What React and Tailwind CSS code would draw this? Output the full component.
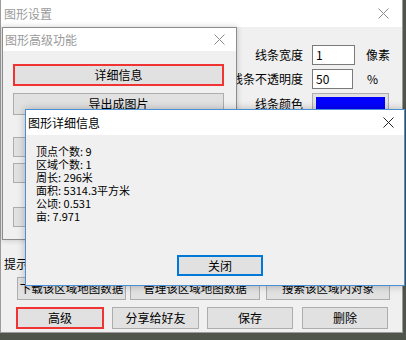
const font = "font-['Noto_Sans_CJK_SC','Microsoft_YaHei',sans-serif]";

const CloseIcon = ({ color = '#000' }) => (
  <svg width="11" height="11" viewBox="0 0 11 11">
    <path d="M0.5 0.5L10.5 10.5M10.5 0.5L0.5 10.5" stroke={color} strokeWidth="1" />
  </svg>
);

const WinButton = ({ children, className = '' }) => (
  <div
    className={
      'flex items-center justify-center bg-[#e1e1e1] text-black leading-none whitespace-nowrap ' +
      className
    }
  >
    {children}
  </div>
);

const App = () => {
  const details = [
    '顶点个数: 9',
    '区域个数: 1',
    '周长: 296米',
    '面积: 5314.3平方米',
    '公顷: 0.531',
    '亩: 7.971',
  ];

  return (
    <div className={`relative w-[406px] h-[340px] overflow-hidden bg-[#4f554a] ${font}`}>
      {/*main settings window*/}
      <div className="absolute left-0 top-0 w-[403px] h-[333px] flex flex-col bg-[#f0f0f0] border-x border-b border-[#9c9c9c]">
        <div className="h-[27px] shrink-0 bg-white flex items-center justify-between pl-[3px] pr-[13px]">
          <span className="text-[12px] text-[#9a9a9a]">图形设置</span>
          <CloseIcon color="#8a8a8a" />
        </div>

        <div className="flex-1 flex flex-col">
          <div className="mt-[18px] ml-[222px] grid grid-cols-[89px_54px_auto] gap-y-[4px] items-center text-[12px] text-black">
            <div className="pr-[9px] text-right leading-[20px]">线条宽度</div>
            <div className="w-[43px] h-[20px] bg-white border border-[#7a7a7a] pl-[3px] leading-[18px]">1</div>
            <div className="leading-[20px]">像素</div>

            <div className="pr-[9px] text-right leading-[20px] whitespace-nowrap">线条不透明度</div>
            <div className="w-[41px] h-[20px] bg-white border border-[#7a7a7a] pl-[3px] leading-[18px]">50</div>
            <div className="leading-[20px] pl-[1px]">%</div>

            <div className="pr-[9px] text-right leading-[21px]">线条颜色</div>
            <div className="col-span-2 w-[77px] h-[21px] border border-[#adadad] bg-[#e1e1e1] p-[3px]">
              <div className="h-full bg-[#0000ff]"></div>
            </div>
          </div>

          <div className="mt-auto pl-[3px] text-[12px] leading-[14px] text-black">提示</div>
          <div className="flex mt-[6px] ml-[16px] h-[23px] gap-[4px] text-[11.5px]">
            <WinButton className="w-[109px] border border-[#adadad]">下载该区域地图数据</WinButton>
            <WinButton className="w-[130px] border border-[#adadad]">管理该区域地图数据</WinButton>
            <WinButton className="w-[124px] ml-[2px] border border-[#adadad]">搜索该区域内对象</WinButton>
          </div>
          <div className="flex mt-[7px] ml-[15px] mb-[3px] h-[22px] gap-[8px] text-[12px]">
            <WinButton className="w-[88px] border-2 border-[#f03434]">高级</WinButton>
            <WinButton className="w-[87px] border border-[#adadad]">分享给好友</WinButton>
            <WinButton className="w-[86px] border border-[#adadad]">保存</WinButton>
            <WinButton className="w-[86px] ml-[1px] border border-[#adadad]">删除</WinButton>
          </div>
        </div>
      </div>

      {/*advanced functions window*/}
      <div className="absolute left-[2px] top-[27px] w-[235px] h-[213px] flex flex-col bg-[#f0f0f0] border border-[#8c8c8c] shadow-[0_0_6px_rgba(0,0,0,0.2)]">
        <div className="h-[23px] shrink-0 bg-white flex items-center justify-between pl-[2px] pr-[11px]">
          <span className="text-[12px] text-[#9a9a9a]">图形高级功能</span>
          <CloseIcon color="#8a8a8a" />
        </div>
        <div className="flex flex-col pl-[10px] text-[12px]">
          <WinButton className="w-[211px] h-[22px] mt-[13px] border-2 border-[#f03434]">详细信息</WinButton>
          <WinButton className="w-[211px] h-[22px] mt-[7px] border border-[#adadad]">导出成图片</WinButton>
          <WinButton className="w-[211px] h-[20px] mt-[22px] border border-[#adadad]"></WinButton>
          <WinButton className="w-[211px] h-[20px] mt-[6px] border border-[#adadad]"></WinButton>
          <WinButton className="w-[211px] h-[20px] mt-[24px] border border-[#adadad]"></WinButton>
        </div>
      </div>

      {/*detail dialog*/}
      <div className="absolute left-[25px] top-[109px] w-[380px] h-[177px] flex flex-col bg-[#f0f0f0] border border-[#4a90d9] shadow-[0_0_8px_rgba(0,0,0,0.25)]">
        <div className="h-[25px] shrink-0 bg-white flex items-center justify-between pl-[2px] pr-[10px]">
          <span className="text-[12px] text-black">图形详细信息</span>
          <CloseIcon color="#222" />
        </div>
        <div className="flex-1 flex flex-col pt-[10px] pl-[10px] pb-[9px]">
          <div className="text-[11px] leading-[13px] text-black">
            {details.map((line, index) => (
              <div key={index} className="h-[13px]">{line}</div>
            ))}
          </div>
          <div className="mt-auto flex justify-center text-[12px]">
            <WinButton className="w-[86px] h-[21px] border-2 border-[#0078d7]">关闭</WinButton>
          </div>
        </div>
      </div>
    </div>
  );
};

export default App;
